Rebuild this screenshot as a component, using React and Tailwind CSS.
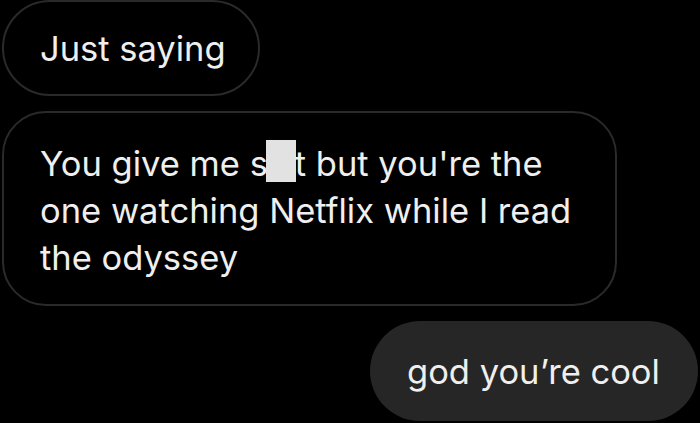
export default function App() {
	return (
		<div className="w-[700px] h-[423px] bg-black overflow-hidden flex flex-col gap-[15px] font-['Inter',sans-serif] text-[34.5px] leading-[47px] text-[#efefef]">
			<div className="ml-[2px] w-[258px] h-[96px] rounded-full border-2 border-[#2a2a2a] flex items-center pl-[36px] shrink-0">
				Just saying
			</div>

			<div className="ml-[2px] w-[615px] h-[195px] rounded-[44px] border-2 border-[#2a2a2a] pl-[36px] pt-[27px] shrink-0">
				<p>
					You give me s
					<span className="inline-block w-[30px] h-[42px] bg-[#e2e2e2] align-[-6px] -ml-[2px] mr-[-1px]"></span>
					t but you're the
				</p>
				<p>one watching Netflix while I read</p>
				<p>the odyssey</p>
			</div>

			<div className="self-end mr-[2px] w-[328px] h-[100px] rounded-full bg-[#262626] flex items-center pl-[37px] shrink-0">
				god you’re cool
			</div>
		</div>
	);
}
